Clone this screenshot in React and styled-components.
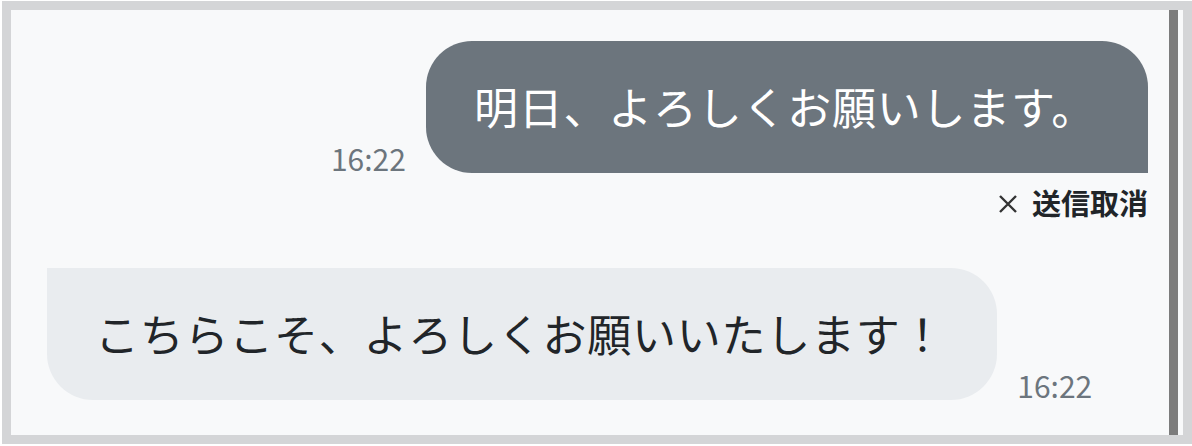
import React from 'react';
import styled, { createGlobalStyle } from 'styled-components';

const GlobalStyle = createGlobalStyle`
  html, body {
    margin: 0;
    padding: 0;
    background: #ffffff;
  }
  body {
    font-family: "Noto Sans CJK JP", "Noto Sans", sans-serif;
  }
`;

const Page = styled.div`
  padding: 1px 0 2px 2px;
`;

const Frame = styled.div`
  height: 443px;
  box-sizing: border-box;
  border: 9px solid #d4d5d7;
  background: #f8f9fa;
  padding-right: 5px;
`;

const ChatArea = styled.div`
  height: 100%;
  box-sizing: border-box;
  border-right: 9px solid #7c7c7c;
  padding: 31px 21px 0 36px;
  display: flex;
  flex-direction: column;
`;

const Row = styled.div`
  display: flex;
  align-items: flex-end;
  justify-content: ${p => (p.$mine ? 'flex-end' : 'flex-start')};
  gap: 20px;
  margin-top: ${p => p.$top || 0}px;
`;

const Bubble = styled.div`
  height: 132px;
  box-sizing: border-box;
  display: flex;
  align-items: center;
  padding: 0 52px 3px 48px;
  font-size: 44px;
  letter-spacing: 0.75px;
  white-space: nowrap;
  background: ${p => (p.$mine ? '#6c757d' : '#e9ecef')};
  color: ${p => (p.$mine ? '#ffffff' : '#212529')};
  border-radius: ${p => (p.$mine ? '46px 46px 0 46px' : '0 46px 46px 46px')};
`;

const Time = styled.span`
  font-size: 30px;
  line-height: 36px;
  color: #6c757d;
  margin-bottom: -3px;
`;

const CancelRow = styled.div`
  display: flex;
  justify-content: flex-end;
  margin-top: 9px;
`;

const CancelButton = styled.button`
  display: flex;
  align-items: center;
  gap: 15px;
  border: none;
  background: none;
  padding: 0;
  font-family: inherit;
  font-size: 29px;
  font-weight: 700;
  line-height: 40px;
  color: #212529;
  cursor: pointer;
`;

const CrossIcon = () => (
  <svg width="18" height="18" viewBox="0 0 18 18" style={{ marginTop: 4 }}>
    <path d="M1 1 L17 17 M17 1 L1 17" stroke="#333" strokeWidth="2.4" fill="none" />
  </svg>
);

export default function App() {
  return (
    <Page>
      <GlobalStyle />
      <Frame>
        <ChatArea>
          <Row $mine>
            <Time>16:22</Time>
            <Bubble $mine>明日、よろしくお願いします。</Bubble>
          </Row>
          <CancelRow>
            <CancelButton>
              <CrossIcon />
              送信取消
            </CancelButton>
          </CancelRow>
          <Row $top={46}>
            <Bubble>こちらこそ、よろしくお願いいたします！</Bubble>
            <Time>16:22</Time>
          </Row>
        </ChatArea>
      </Frame>
    </Page>
  );
}
